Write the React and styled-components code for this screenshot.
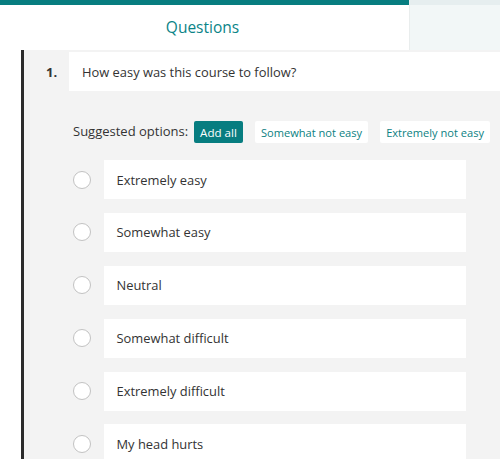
import React from "react";
import styled, { createGlobalStyle } from "styled-components";

const GlobalStyle = createGlobalStyle`
	html, body {
		margin: 0;
		padding: 0;
		background: #ffffff;
		font-family: "Open Sans", "Noto Sans", sans-serif;
		color: #333333;
	}
`;

const Page = styled.div`
	width: 500px;
	height: 459px;
	overflow: hidden;
	background: #ffffff;
`;

const Header = styled.div`
	display: flex;
	height: 50px;
`;

const HeaderMain = styled.div`
	width: 409px;
	border-top: 5px solid #077d80;
	display: flex;
	justify-content: center;
	align-items: center;
	box-sizing: border-box;
`;

const HeaderTitle = styled.span`
	font-size: 15.5px;
	color: #0b8487;
	margin-top: -1px;
	margin-right: 4px;
`;

const SidePanel = styled.div`
	flex: 1;
	background: #f2f7f7;
	border-top: 5px solid #e6eeef;
	border-left: 1px solid #e9eded;
	box-sizing: border-box;
`;

const Card = styled.div`
	margin-left: 21px;
	border-left: 3px solid #2b2b2b;
	background: #f3f3f3;
	padding-top: 2px;
	min-height: 420px;
`;

const QuestionRow = styled.div`
	display: flex;
	align-items: stretch;
	height: 39px;
`;

const Number = styled.div`
	width: 45px;
	box-sizing: border-box;
	padding-left: 22px;
	display: flex;
	align-items: center;
	font-weight: 700;
	font-size: 13px;
	color: #333333;
`;

const TitleBox = styled.div`
	flex: 1;
	background: #ffffff;
	display: flex;
	align-items: center;
	padding-left: 13px;
	font-size: 12.9px;
	color: #333333;
`;

const Suggested = styled.div`
	display: flex;
	align-items: center;
	gap: 12px;
	margin-top: 30px;
	padding-left: 49px;
	height: 22px;
`;

const SuggestLabel = styled.span`
	font-size: 13px;
	color: #333333;
	margin-right: -6px;
	margin-top: -3px;
	white-space: nowrap;
`;

const Chip = styled.span`
	height: 22px;
	padding: 0 6px;
	display: flex;
	align-items: center;
	border-radius: 2px;
	background: ${(p) => (p.$primary ? "#077d80" : "#ffffff")};
	color: ${(p) => (p.$primary ? "#ffffff" : "#0b7f82")};
	font-size: ${(p) => (p.$primary ? 11.6 : 11.1)}px;
	white-space: nowrap;
`;

const Options = styled.div`
	display: flex;
	flex-direction: column;
	gap: 13.9px;
	margin-top: 17px;
`;

const OptionRow = styled.div`
	display: flex;
	align-items: center;
	padding-left: 48.5px;
`;

const Radio = styled.span`
	width: 18px;
	height: 18px;
	box-sizing: border-box;
	border-radius: 50%;
	border: 1.5px solid #c2c2c2;
	background: #ffffff;
	margin-right: 13px;
	flex-shrink: 0;
`;

const OptionBox = styled.div`
	width: 362px;
	height: 39px;
	background: #ffffff;
	display: flex;
	align-items: center;
	padding-left: 13px;
	box-sizing: border-box;
	font-size: 12.9px;
	color: #333333;
`;

const options = [
	"Extremely easy",
	"Somewhat easy",
	"Neutral",
	"Somewhat difficult",
	"Extremely difficult",
	"My head hurts",
];

export default function App() {
	return (
		<Page>
			<GlobalStyle />
			<Header>
				<HeaderMain>
					<HeaderTitle>Questions</HeaderTitle>
				</HeaderMain>
				<SidePanel />
			</Header>
			<Card>
				<QuestionRow>
					<Number>1.</Number>
					<TitleBox>How easy was this course to follow?</TitleBox>
				</QuestionRow>
				<Suggested>
					<SuggestLabel>Suggested options:</SuggestLabel>
					<Chip $primary>Add all</Chip>
					<Chip>Somewhat not easy</Chip>
					<Chip>Extremely not easy</Chip>
				</Suggested>
				<Options>
					{options.map((o) => (
						<OptionRow key={o}>
							<Radio />
							<OptionBox>{o}</OptionBox>
						</OptionRow>
					))}
				</Options>
			</Card>
		</Page>
	);
}
